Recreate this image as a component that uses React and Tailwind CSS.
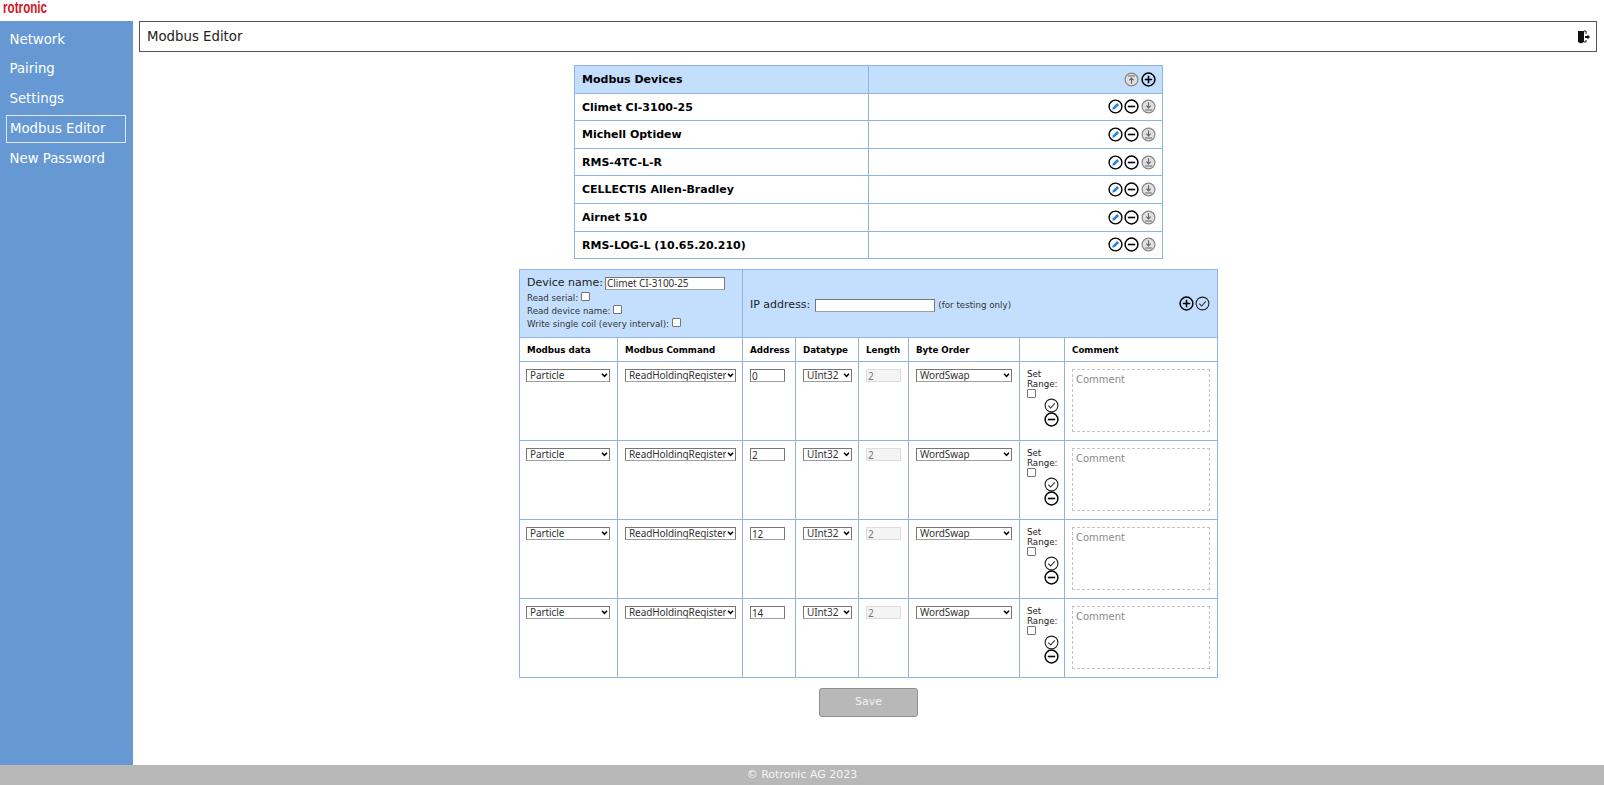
const devices = [
  "Climet CI-3100-25",
  "Michell Optidew",
  "RMS-4TC-L-R",
  "CELLECTIS Allen-Bradley",
  "Airnet 510",
  "RMS-LOG-L (10.65.20.210)",
];

const menu = ["Network", "Pairing", "Settings", "Modbus Editor", "New Password"];

const registers = ["0", "2", "12", "14"];

function Circle({ gray, children }) {
  return (
    <svg viewBox="0 0 15 15" className="h-[15px] w-[15px]" fill="none">
      <circle cx="7.5" cy="7.5" r="6.4" stroke={gray ? "#888" : "#000"} strokeWidth={gray ? 1.2 : 1.5} fill={gray ? "#e0e0e0" : "none"} />
      {children}
    </svg>
  );
}

const PlusIcon = () => (
  <Circle>
    <path d="M3.8 7.5h7.400M7.500 3.800v7.400" stroke="#000" strokeWidth="1.6" />
  </Circle>
);

const MinusIcon = () => (
  <Circle>
    <path d="M3.800 7.500h7.400" stroke="#000" strokeWidth="1.6" />
  </Circle>
);

const CheckIcon = () => (
  <svg viewBox="0 0 15 15" className="h-[15px] w-[15px]" fill="none">
    <circle cx="7.500" cy="7.500" r="6.400" stroke="#222" strokeWidth="1.100" />
    <path d="M4.300 7.700l2.300 2.300 4.200-4.600" stroke="#333" strokeWidth="1.100" />
  </svg>
);

const EditIcon = () => (
  <svg viewBox="0 0 15 15" className="h-[15px] w-[15px]" fill="none">
    <circle cx="7.500" cy="7.500" r="6.400" stroke="#000" strokeWidth="1.400" />
    <path d="M4.200 10.800l.8-2.600 4.200-4.100 1.800 1.800-4.200 4.100z" fill="#1e7fe0" />
  </svg>
);

const DownloadIcon = () => (
  <Circle gray>
    <path d="M7.500 3.200v5.400M5.300 6.600l2.200 2.300 2.200-2.300M4.200 11h6.600" stroke="#666" strokeWidth="1.100" />
  </Circle>
);

const UploadIcon = () => (
  <Circle gray>
    <path d="M7.500 11.800V6.400M5.300 8.400l2.200-2.300 2.200 2.300M4.200 4h6.600" stroke="#666" strokeWidth="1.100" />
  </Circle>
);

const LogoutIcon = () => (
  <svg viewBox="0 0 13 14" className="h-[14px] w-[13px]">
    <path d="M1 1h6v11l-3 1.500-3-1.500z" fill="#111" />
    <path d="M7 1h2v3M9 10v2H7" stroke="#111" fill="none" />
    <path d="M8 6h2.500V4.500L13 7l-2.500 2.500V8H8z" fill="#111" />
  </svg>
);

const fieldFont = "font-['Noto_Sans',sans-serif] text-[10px] leading-[11px] tracking-[-0.1px]";

const fieldClass = `box-border border border-[#767676] border-b-[#a0a0a0] bg-white text-[#333] outline-none ${fieldFont}`;

function Select({ value, className = "" }) {
  return (
    <div className={`relative h-[13px] ${className}`}>
      <select
        defaultValue={value}
        className={`block h-full w-full appearance-none rounded-none border border-[#767676] border-b-[#a0a0a0] bg-white py-0 pr-[9px] pl-[3px] text-[#333] ${fieldFont}`}
      >
        <option>{value}</option>
      </select>
      <svg viewBox="0 0 8 6" className="pointer-events-none absolute top-[4px] right-[2px] h-[5px] w-[7px]" fill="none">
        <path d="M1 1l3 3 3-3" stroke="#000" strokeWidth="1.800" />
      </svg>
    </div>
  );
}

function Check({ className = "" }) {
  return (
    <input
      type="checkbox"
      className={`h-[9px] w-[9px] appearance-none rounded-[1px] border border-[#777] bg-white ${className}`}
    />
  );
}

function RegisterRow({ address }) {
  const cell = "border border-[#8fb4e3] align-top px-[7px] py-[7px]";
  return (
    <tr className="h-[79px]">
      <td className={cell}>
        <Select value="Particle" className="-ml-px w-[84px]" />
      </td>
      <td className={cell}>
        <Select value="ReadHoldingRegister" className="w-[111px]" />
      </td>
      <td className={cell}>
        <input defaultValue={address} className={`${fieldClass} block h-[13px] w-[35px] px-[1px]`} />
      </td>
      <td className={cell}>
        <Select value="UInt32" className="w-[49px]" />
      </td>
      <td className={cell}>
        <input
          disabled
          defaultValue="2"
          className={`block box-border h-[13px] w-[35px] border border-[#ddd] bg-[#f4f4f4] px-[1px] text-[#777] ${fieldFont}`}
        />
      </td>
      <td className={cell}>
        <Select value="WordSwap" className="w-[96px]" />
      </td>
      <td className="border border-[#8fb4e3] align-top pl-[7px] pt-[7px]">
        <div className="text-[8.7px] leading-[10px] text-[#222]">Set Range:</div>
        <Check className="block" />
        <div className="flex flex-col items-end pr-[5px]">
          <CheckIcon />
          <div className="-mt-px">
            <MinusIcon />
          </div>
        </div>
      </td>
      <td className="border border-[#8fb4e3] align-top px-[7px] pt-[7px] pb-[7px]">
        <textarea
          placeholder="Comment"
          className="block box-border h-[63px] w-[138px] resize-none border border-dashed border-[#c4c4c4] px-[3px] py-[4px] font-['DejaVu_Sans',sans-serif] text-[10px] leading-[12px] placeholder:text-[#8a8a8a]"
        />
      </td>
    </tr>
  );
}

export default function App() {
  return (
    <div className="flex h-[785px] flex-col overflow-hidden bg-white font-['DejaVu_Sans',sans-serif] text-black">
      <div className="flex h-[21px] items-start pt-[1px] pl-[3px]">
        <span className="origin-top-left scale-x-[0.72] font-['Liberation_Sans',sans-serif] text-[16px] leading-[14px] font-bold tracking-[0.1px] text-[#d4111e]">
          rotronic
        </span>
      </div>

      <div className="flex min-h-0 flex-1">
        <aside className="w-[133px] shrink-0 bg-[#6699d4] pt-[5px] pl-[6px] pr-[7px]">
          {menu.map((item) => (
            <div
              key={item}
              className={`mb-[2.200px] flex h-[27.500px] items-center text-[13.300px] text-white ${
                item === "Modbus Editor"
                  ? "w-[120px] border border-[#dce8f6] pl-[3px]"
                  : "pl-[3.500px]"
              }`}
            >
              {item}
            </div>
          ))}
        </aside>

        <main className="min-w-0 flex-1 pl-[6px] pr-[7px]">
          <div className="flex h-[31px] items-center justify-between border border-[#555] pl-[7px] pr-[6px] text-[13.300px] text-[#222]">
            <span>Modbus Editor</span>
            <LogoutIcon />
          </div>

          <div className="flex flex-col items-center">
            <table className="mt-[13px] ml-[1px] w-[589px] table-fixed border-collapse">
              <colgroup>
                <col className="w-[294px]" />
                <col />
              </colgroup>
              <tbody>
                <tr className="h-[27.600px] bg-[#c3dffd] text-[11px] font-bold">
                  <td className="border border-[#8fb4e3] pt-[2px] pl-[7px]">Modbus Devices</td>
                  <td className="border border-[#8fb4e3] pr-[6.500px]">
                    <div className="flex justify-end gap-[1.500px]">
                      <UploadIcon />
                      <PlusIcon />
                    </div>
                  </td>
                </tr>
                {devices.map((name) => (
                  <tr key={name} className="h-[27.600px] text-[11px] font-bold">
                    <td className="border border-[#8fb4e3] pt-[2px] pl-[7px]">{name}</td>
                    <td className="border border-[#8fb4e3] pr-[6.500px]">
                      <div className="flex justify-end gap-[1.500px]">
                        <EditIcon />
                        <MinusIcon />
                        <DownloadIcon />
                      </div>
                    </td>
                  </tr>
                ))}
              </tbody>
            </table>

            <table className="mt-[10px] ml-[1px] w-[699px] table-fixed border-collapse">
              <colgroup>
                <col className="w-[98px]" />
                <col className="w-[125px]" />
                <col className="w-[53px]" />
                <col className="w-[63px]" />
                <col className="w-[50px]" />
                <col className="w-[111px]" />
                <col className="w-[45px]" />
                <col />
              </colgroup>
              <tbody>
                <tr className="h-[68px] bg-[#c3dffd]">
                  <td colSpan={2} className="border border-[#8fb4e3] pl-[7px] align-middle">
                    <div className="flex items-center text-[11px] leading-[14px] text-[#222]">
                      Device name:
                      <input
                        defaultValue="Climet CI-3100-25"
                        className={`${fieldClass} ml-[2px] h-[13px] w-[120px] px-[1px]`}
                      />
                    </div>
                    <div className="mt-[2px] text-[8.700px] leading-[13px] text-[#333]">
                      <div className="flex items-start">Read serial:<Check className="ml-[3px]" /></div>
                      <div className="flex items-start">Read device name:<Check className="ml-[3px]" /></div>
                      <div className="flex items-start">Write single coil (every interval):<Check className="ml-[3px]" /></div>
                    </div>
                  </td>
                  <td colSpan={6} className="border border-[#8fb4e3] pt-[4px] pl-[7px] pr-[7px]">
                    <div className="flex items-center text-[11px] text-[#222]">
                      IP address:
                      <input className={`${fieldClass} ml-[5px] h-[13px] w-[120px]`} />
                      <span className="ml-[3px] text-[8.700px] text-[#333]">(for testing only)</span>
                      <div className="ml-auto -mt-[4px] flex gap-[1.500px]">
                        <PlusIcon />
                        <CheckIcon />
                      </div>
                    </div>
                  </td>
                </tr>
                <tr className="h-[24px] text-[8.700px] font-bold">
                  {["Modbus data", "Modbus Command", "Address", "Datatype", "Length", "Byte Order", "", "Comment"].map((h, i) => (
                    <td key={i} className="border border-[#8fb4e3] pt-[1px] pl-[7px]">
                      {h}
                    </td>
                  ))}
                </tr>
                {registers.map((r) => (
                  <RegisterRow key={r} address={r} />
                ))}
              </tbody>
            </table>

            <button className="mt-[10px] ml-[1px] h-[29px] w-[99px] rounded-[3px] border border-[#8f8f8f] bg-[#b8b8b8] text-[11px] text-[#f2f2f2]">
              Save
            </button>
          </div>
        </main>
      </div>

      <footer className="flex h-[20px] shrink-0 items-center justify-center bg-[#b8b8b8] text-[11px] text-[#f5f5f5]">
        © Rotronic AG 2023
      </footer>
    </div>
  );
}
